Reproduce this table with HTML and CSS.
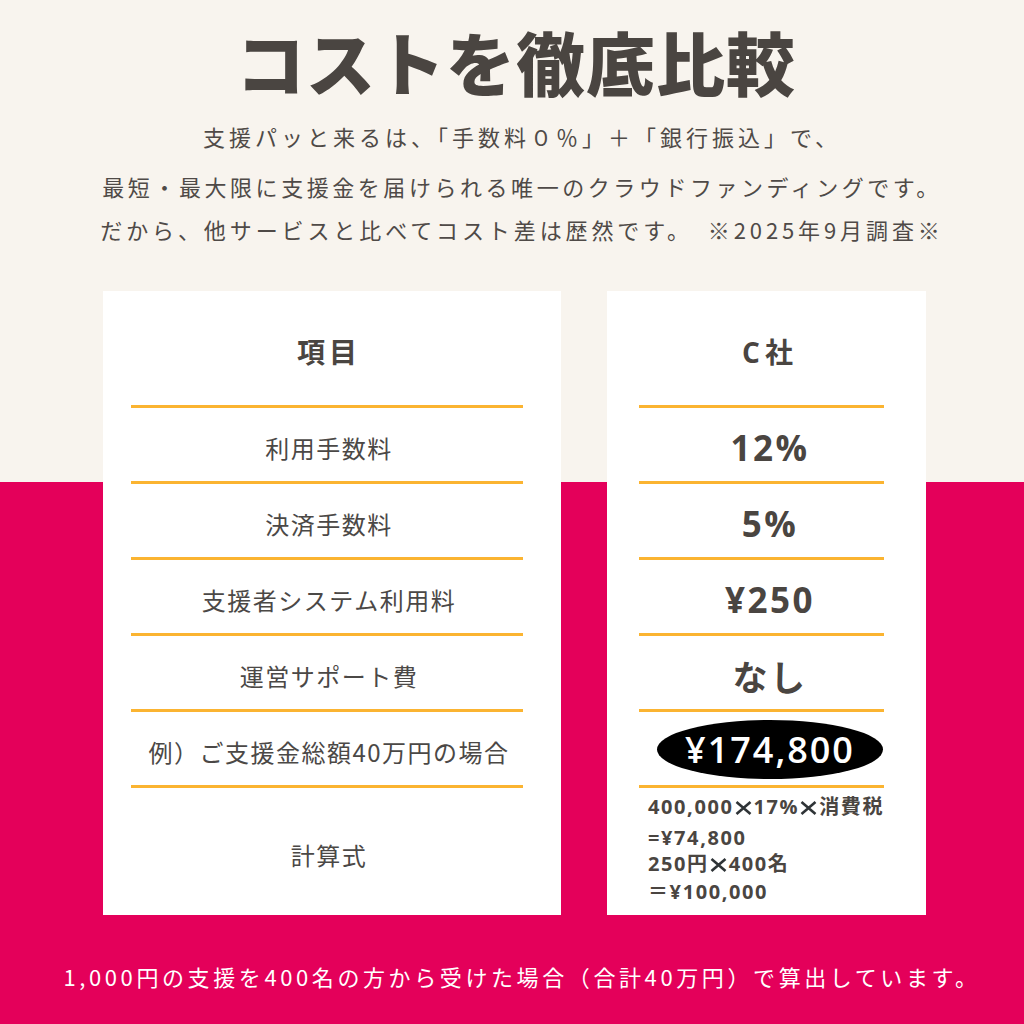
FILE: index.html
```html
<!DOCTYPE html>
<html lang="ja">
<head>
<meta charset="utf-8">
<title>コストを徹底比較</title>
<link rel="stylesheet" href="styles.css">
</head>
<body>
<div class="page">
  <h1 class="title">コストを徹底比較</h1>
  <div class="lead">
    <p class="l1">支援パッと来るは、「手数料０％」＋「銀行振込」で、</p>
    <p class="l2">最短・最大限に支援金を届けられる唯一のクラウドファンディングです。</p>
    <p class="l3">だから、他サービスと比べてコスト差は歴然です。　※2025年9月調査※</p>
  </div>
  <div class="compare">
    <section class="card card-items">
      <div class="cell head">項目</div>
      <div class="rule"></div>
      <div class="cell">利用手数料</div>
      <div class="rule"></div>
      <div class="cell">決済手数料</div>
      <div class="rule"></div>
      <div class="cell">支援者システム利用料</div>
      <div class="rule"></div>
      <div class="cell">運営サポート費</div>
      <div class="rule"></div>
      <div class="cell">例）ご支援金総額40万円の場合</div>
      <div class="rule"></div>
      <div class="cell calc-label">計算式</div>
    </section>
    <section class="card card-c">
      <div class="cell head">C社</div>
      <div class="rule"></div>
      <div class="cell">12%</div>
      <div class="rule"></div>
      <div class="cell">5%</div>
      <div class="rule"></div>
      <div class="cell">¥250</div>
      <div class="rule"></div>
      <div class="cell">なし</div>
      <div class="rule"></div>
      <div class="cell total"><div class="pill">¥174,800</div></div>
      <div class="rule"></div>
      <div class="calc">
        <div class="c1">400,000<svg class="x" viewBox="0 0 17 14" aria-label="×"><path d="M1.5 1 L15.5 13 M15.5 1 L1.5 13"/></svg>17%<svg class="x" viewBox="0 0 17 14" aria-label="×"><path d="M1.5 1 L15.5 13 M15.5 1 L1.5 13"/></svg>消費税</div>
        <div class="c2">=¥74,800</div>
        <div class="c3">250円<svg class="x" viewBox="0 0 17 14" aria-label="×"><path d="M1.5 1 L15.5 13 M15.5 1 L1.5 13"/></svg>400名</div>
        <div class="c4">＝¥100,000</div>
      </div>
    </section>
  </div>
  <p class="note">1,000円の支援を400名の方から受けた場合（合計40万円）で算出しています。</p>
</div>
</body>
</html>
```
FILE: styles.css
```css
body {
  margin: 0;
}

.page {
  width: 1024px;
  height: 1024px;
  display: flex;
  flex-direction: column;
  background: linear-gradient(to bottom, #f8f4ee 0, #f8f4ee 482px, #e4005a 482px, #e4005a 100%);
  font-family: "Noto Sans CJK JP", sans-serif;
  color: #4a4541;
}

.title {
  margin: 0;
  padding: 27px 0 0 8px;
  font-size: 69px;
  line-height: 69px;
  font-weight: 900;
  letter-spacing: 1px;
  text-align: center;
}

.lead {
  padding-left: 20px;
  text-align: center;
  font-size: 22px;
  letter-spacing: 3.6px;
  color: #4f4a47;
}

.lead p {
  margin: 0;
  line-height: 40px;
}

.lead .l1 { margin-top: 20px; letter-spacing: 4px; }
.lead .l2 { margin-top: 10px; letter-spacing: 3.55px; }
.lead .l3 { margin-top: 3px; letter-spacing: 3.9px; }

.compare {
  margin-top: 42px;
  padding-left: 103px;
  display: flex;
  gap: 46px;
}

.card {
  height: 624px;
  background: #fff;
  display: flex;
  flex-direction: column;
}

.card-items { width: 458px; }
.card-c { width: 319px; }

.cell {
  flex: none;
  height: 73px;
  box-sizing: border-box;
  padding-top: 5px;
  display: flex;
  align-items: center;
  justify-content: center;
  white-space: nowrap;
}

.cell.head {
  height: 114px;
  font-size: 28px;
  font-weight: 700;
  letter-spacing: 4px;
}

.rule {
  flex: none;
  height: 3px;
  background: #fbb431;
}

.card-items .rule { margin: 0 38px 0 28px; }
.card-c .rule { margin: 0 42px 0 32px; }

.card-items .cell {
  padding-right: 6px;
  font-size: 24px;
  letter-spacing: 1.5px;
  color: #4b4846;
}

.card-items .cell.head {
  font-size: 28px;
  letter-spacing: 4px;
  color: #4a4541;
}

.card-items .calc-label {
  flex: 1;
  height: auto;
}

.card-c .cell {
  padding-left: 7px;
  font-family: "Open Sans", "Noto Sans CJK JP", sans-serif;
  font-size: 35px;
  font-weight: 700;
  letter-spacing: 2.5px;
}

.card-c .cell.head {
  font-size: 28px;
  letter-spacing: 5px;
}

.card-c .cell.total {
  padding-top: 2px;
}

.pill {
  width: 226px;
  height: 59px;
  border-radius: 50%;
  background: #000;
  color: #fff;
  display: flex;
  align-items: center;
  justify-content: center;
  font-size: 36px;
  font-weight: 600;
  letter-spacing: 2px;
}

.calc {
  flex: 1;
  padding: 6px 0 0 41px;
  font-family: "Open Sans", "Noto Sans CJK JP", sans-serif;
  font-size: 20px;
  font-weight: 700;
  letter-spacing: 1.6px;
  color: #4a4541;
}

.calc div {
  line-height: 26px;
  white-space: nowrap;
}

.calc .c2 { margin-top: 5px; }
.calc .c4 { margin-top: 2px; }

.x {
  width: 17px;
  height: 14px;
  margin: 0 2px 0 1px;
  vertical-align: -1px;
  fill: none;
  stroke: #2f3437;
  stroke-width: 2.6;
}

.note {
  margin: 41px 0 0;
  padding-left: 20px;
  line-height: 40px;
  text-align: center;
  font-size: 22px;
  letter-spacing: 3.6px;
  color: #fff;
}
```
